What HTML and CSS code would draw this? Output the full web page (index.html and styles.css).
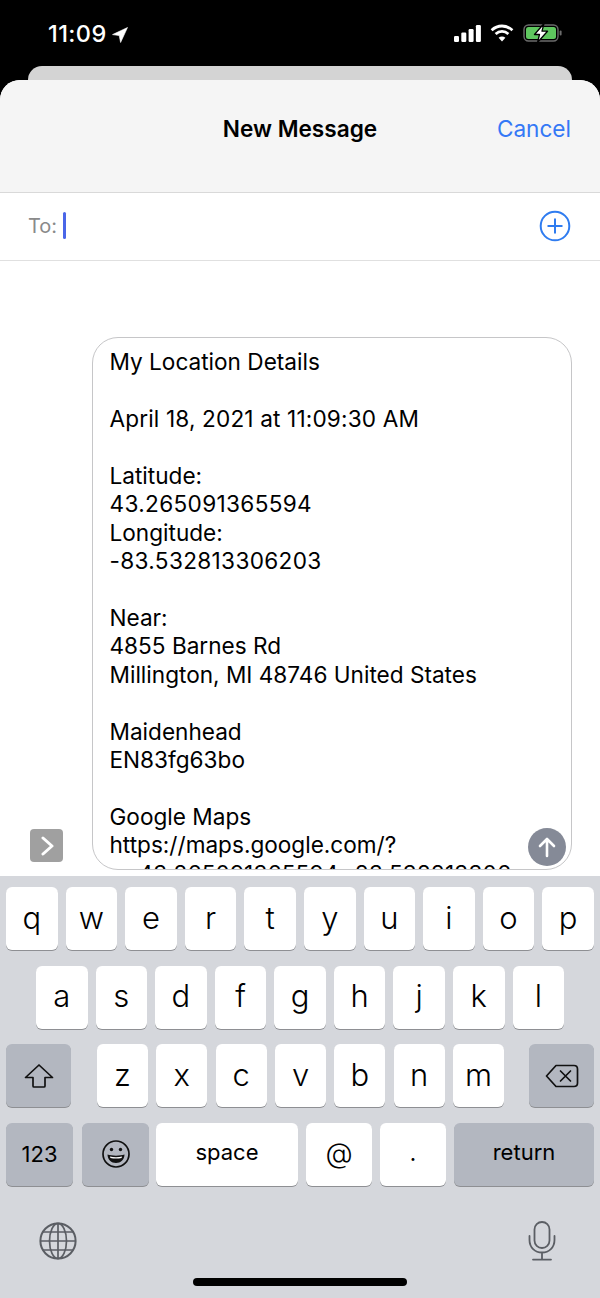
FILE: index.html
```html
<!DOCTYPE html>
<html lang="en">
<head>
    <meta charset="UTF-8">
    <meta name="viewport" content="width=device-width, initial-scale=1.0">
    <title>New Message</title>
    <link rel="stylesheet" href="styles.css">
</head>
<body>
    <div class="phone">
        <!-- Status bar -->
        <div class="status-bar">
            <div class="status-left">
                <span class="time">11:09</span>
                <svg class="loc-arrow" width="16" height="16" viewBox="0 0 16 16"><path d="M15.5 .5 L.5 7.6 L7.2 8.6 L8.6 15.5 Z" fill="#fff" stroke="#fff" stroke-width=".6" stroke-linejoin="round"/></svg>
            </div>
            <div class="status-right">
                <svg width="27" height="17" viewBox="0 0 27 17" fill="#fff">
                    <rect x="0" y="11" width="5" height="6" rx="1.2"/>
                    <rect x="7.3" y="7.5" width="5" height="9.5" rx="1.2"/>
                    <rect x="14.6" y="4" width="5" height="13" rx="1.2"/>
                    <rect x="21.9" y="0" width="5" height="17" rx="1.2"/>
                </svg>
                <svg width="24" height="18" viewBox="0 0 24 18" fill="none" stroke="#fff" stroke-width="2.8">
                    <path d="M1.6 6.2 C7.6 .6 16.4 .6 22.4 6.2"/>
                    <path d="M5.6 10 C9.4 6.6 14.6 6.6 18.4 10"/>
                    <path d="M12 17.6 L8.6 13.8 C10.6 12.2 13.4 12.2 15.4 13.8 Z" fill="#fff" stroke="none"/>
                </svg>
                <svg width="40" height="20" viewBox="0 0 40 20">
                    <rect x="1" y="2" width="34" height="16" rx="4.5" fill="none" stroke="#6b6b6b" stroke-width="1.4"/>
                    <rect x="3" y="4" width="30" height="12" rx="2.5" fill="#5fc75f"/>
                    <rect x="36.6" y="7.5" width="2" height="5" rx="1" fill="#6b6b6b"/>
                    <path d="M21 0.5 L11.5 11.5 H16.5 L14.5 19.5 L24.5 8.2 H19 Z" fill="#fff" stroke="#000" stroke-width="1.3" stroke-linejoin="round"/>
                </svg>
            </div>
        </div>
        <div class="back-card"></div>

        <!-- Compose sheet -->
        <div class="sheet">
            <div class="sheet-header">
                <span class="sheet-title">New Message</span>
                <span class="cancel">Cancel</span>
            </div>
            <div class="to-row">
                <span class="to-label">To:</span>
                <span class="caret"></span>
                <svg class="add-btn" width="34" height="34" viewBox="0 0 34 34" fill="none" stroke="#2f7cf0">
                    <circle cx="17" cy="17" r="14.3" stroke-width="2"/>
                    <path d="M17 9.5 V24.5 M9.5 17 H24.5" stroke-width="2"/>
                </svg>
            </div>
            <div class="compose">
                <div class="expand-btn">
                    <svg width="16" height="20" viewBox="0 0 16 20" fill="none" stroke="#fff" stroke-width="3" stroke-linecap="round" stroke-linejoin="round"><path d="M4 2 L13 10 L4 18"/></svg>
                </div>
                <div class="bubble">
                    <p class="bubble-text">My Location Details<br><br><span class="date">April 18, 2021 at 11:09:30 AM</span><br><br>Latitude:<br><span class="digits">43.265091365594</span><br>Longitude:<br><span class="digits">-83.532813306203</span><br><br>Near:<br>4855 Barnes Rd<br>Millington, MI 48746 United States<br><br>Maidenhead<br>EN83fg63bo<br><br>Google Maps<br>https://maps.google.com/?<br><span class="date">q=43.265091365594,-83.532813306</span></p>
                    <div class="send-btn">
                        <svg width="20" height="22" viewBox="0 0 20 22" fill="none" stroke="#fff" stroke-width="2.6" stroke-linecap="round" stroke-linejoin="round"><path d="M10 20 V3 M3 10 L10 3 L17 10"/></svg>
                    </div>
                </div>
            </div>
        </div>

        <!-- Keyboard -->
        <div class="keyboard">
            <div class="key-row">
                <div class="key">q</div><div class="key">w</div><div class="key">e</div><div class="key">r</div><div class="key">t</div>
                <div class="key">y</div><div class="key">u</div><div class="key">i</div><div class="key">o</div><div class="key">p</div>
            </div>
            <div class="key-row row-middle">
                <div class="key">a</div><div class="key">s</div><div class="key">d</div><div class="key">f</div><div class="key">g</div>
                <div class="key">h</div><div class="key">j</div><div class="key">k</div><div class="key">l</div>
            </div>
            <div class="key-row row-shift">
                <div class="key key-dark key-side">
                    <svg width="30" height="26" viewBox="0 0 30 26" fill="none" stroke="#111" stroke-width="1.7" stroke-linejoin="round"><path d="M15 2 L1.5 14.5 H9 V23 C9 23.6 9.4 24 10 24 H20 C20.6 24 21 23.6 21 23 V14.5 H28.5 Z"/></svg>
                </div>
                <div class="letters">
                    <div class="key">z</div><div class="key">x</div><div class="key">c</div><div class="key">v</div><div class="key">b</div><div class="key">n</div><div class="key">m</div>
                </div>
                <div class="key key-dark key-side">
                    <svg width="34" height="24" viewBox="0 0 34 24" fill="none" stroke="#111" stroke-width="1.7" stroke-linejoin="round" stroke-linecap="round"><path d="M11 1.5 H29 C31 1.5 32.5 3 32.5 5 V19 C32.5 21 31 22.5 29 22.5 H11 L1.5 12 Z"/><path d="M15.5 7 L25.5 17 M25.5 7 L15.5 17"/></svg>
                </div>
            </div>
            <div class="key-row row-bottom">
                <div class="key key-dark key-small key-num">123</div>
                <div class="key key-dark key-num key-emoji">
                    <svg width="30" height="30" viewBox="0 0 30 30" fill="none" stroke="#111" stroke-width="1.7"><circle cx="15" cy="15" r="13"/><circle cx="10.5" cy="10.5" r="1.7" fill="#111" stroke="none"/><circle cx="19.5" cy="10.5" r="1.7" fill="#111" stroke="none"/><path d="M6.5 15.5 C11 17 19 17 23.5 15.5 C23.5 20.5 19.5 24 15 24 C10.5 24 6.5 20.5 6.5 15.5 Z" fill="#111" stroke="none"/><path d="M9 17.6 C12.5 18.5 17.5 18.5 21 17.6 L20.6 19 C17 19.8 13 19.8 9.4 19 Z" fill="#fff" stroke="none"/></svg>
                </div>
                <div class="key key-small key-space">space</div>
                <div class="key key-at">@</div>
                <div class="key key-at key-dot">.</div>
                <div class="key key-dark key-small key-return">return</div>
            </div>
            <div class="kb-bottom">
                <svg width="38" height="38" viewBox="0 0 38 38" fill="none" stroke="#5b5e64" stroke-width="1.7">
                    <circle cx="19" cy="19" r="17.6" stroke-width="2"/>
                    <ellipse cx="19" cy="19" rx="8.5" ry="17.6"/>
                    <path d="M19 1.4 V36.6 M1.4 19 H36.6 M4 10 H34 M4 28 H34"/>
                </svg>
                <svg width="28" height="40" viewBox="0 0 28 40" fill="none" stroke="#5b5e64" stroke-width="1.8" stroke-linecap="round">
                    <rect x="6.5" y="1" width="15" height="26" rx="7.5"/>
                    <path d="M1.5 15 V19 C1.5 26.5 7 31.5 14 31.5 C21 31.5 26.5 26.5 26.5 19 V15 M14 31.5 V38.6 M5 38.6 H23"/>
                </svg>
            </div>
            <div class="home-indicator"></div>
        </div>
    </div>
</body>
</html>
```

FILE: styles.css
```css
* {
    box-sizing: border-box;
}
html, body {
    margin: 0;
    padding: 0;
}
body {
    font-family: Inter, "Liberation Sans", sans-serif;
    background-color: black;
    color: black;
}
.phone {
    width: 600px;
    height: 1298px;
    display: flex;
    flex-direction: column;
    overflow: hidden;
}

/* Status bar */
.status-bar {
    height: 66px;
    flex: none;
    display: flex;
    justify-content: space-between;
    align-items: flex-start;
    padding: 20px 37px 0 48px;
    color: white;
}
.status-left {
    display: flex;
    align-items: center;
    gap: 5px;
}
.time {
    font-size: 23.5px;
    line-height: 28px;
    font-weight: 500;
    letter-spacing: 0.4px;
}
.loc-arrow {
    margin-top: 1px;
}
.status-right {
    display: flex;
    align-items: center;
    gap: 9px;
    padding-top: 3px;
}
.back-card {
    height: 14px;
    flex: none;
    margin: 0 28px;
    background-color: #d4d4d4;
    border-radius: 14px 14px 0 0;
}

/* Sheet */
.sheet {
    flex: 1;
    display: flex;
    flex-direction: column;
    background-color: white;
    border-radius: 20px 20px 0 0;
    overflow: hidden;
}
.sheet-header {
    height: 113px;
    flex: none;
    display: flex;
    justify-content: flex-end;
    position: relative;
    padding: 33px 29px 0 0;
    background-color: #f5f5f5;
    border-bottom: 1px solid #d9d9d9;
    font-size: 22.6px;
    line-height: 32px;
}
.sheet-title {
    position: absolute;
    left: 0;
    right: 0;
    text-align: center;
    font-weight: 600;
    color: black;
}
.cancel {
    color: #3478f6;
}
.to-row {
    height: 68px;
    flex: none;
    display: flex;
    align-items: center;
    padding: 0 28px 2px 28px;
    border-bottom: 1px solid #e0e0e0;
}
.to-label {
    font-size: 20px;
    color: #8a8a8a;
}
.caret {
    width: 3px;
    height: 27px;
    margin-left: 6px;
    background-color: #4a66e8;
    border-radius: 2px;
}
.add-btn {
    margin-left: auto;
}
.compose {
    height: 615px;
    flex: none;
    display: flex;
    align-items: flex-end;
    gap: 29px;
    padding: 76px 28px 6px 30px;
}
.expand-btn {
    width: 33px;
    height: 33px;
    flex: none;
    display: flex;
    align-items: center;
    justify-content: center;
    margin-bottom: 8px;
    background-color: #a0a0a0;
    border-radius: 4px;
}
.bubble {
    flex: 1;
    height: 100%;
    position: relative;
    padding: 10px 0 0 16.5px;
    border: 1px solid #c6c6c8;
    border-radius: 26px;
    overflow: hidden;
}
.bubble-text {
    margin: 0;
    font-size: 22.6px;
    line-height: 28.44px;
    color: black;
    white-space: nowrap;
}
.date {
    letter-spacing: 0.15px;
}
.digits {
    letter-spacing: 0.33px;
}
.send-btn {
    position: absolute;
    right: 5px;
    bottom: 3px;
    width: 38px;
    height: 38px;
    display: flex;
    align-items: center;
    justify-content: center;
    background-color: #858a97;
    border-radius: 50%;
}

/* Keyboard */
.keyboard {
    height: 422px;
    flex: none;
    display: flex;
    flex-direction: column;
    gap: 15.6px;
    padding: 11px 6px 0;
    background-color: #d5d7dc;
}
.key-row {
    height: 63px;
    flex: none;
    display: flex;
    gap: 8px;
}
.row-middle {
    padding: 0 30px;
}
.row-shift {
    gap: 25px;
}
.letters {
    flex: 1;
    display: flex;
    gap: 8.5px;
    padding-left: 1px;
}
.key {
    flex: 1;
    display: flex;
    align-items: center;
    justify-content: center;
    padding-bottom: 3px;
    background-color: white;
    border-radius: 6px;
    box-shadow: 0 1px 0 #8e8f93;
    font-size: 31px;
    font-weight: 350;
    color: black;
}
.key-dark {
    padding-bottom: 0;
    background-color: #b3b7c0;
}
.key-side {
    flex: none;
    width: 65px;
}
.key-small {
    font-size: 22px;
    font-weight: 400;
}
.key-num {
    flex: none;
    width: 67px;
}
.key-emoji {
    margin: 0 -1px 0 1px;
}
.key-space {
    flex: none;
    width: 142px;
    padding-bottom: 4px;
}
.key-at {
    flex: none;
    width: 66px;
    font-size: 28px;
}
.key-dot {
    padding-bottom: 6px;
}
.key-return {
    flex: 1;
    padding-bottom: 4px;
}
.kb-bottom {
    display: flex;
    justify-content: space-between;
    align-items: center;
    height: 42px;
    margin-top: 19px;
    padding: 0 38px 0 33px;
}
.home-indicator {
    width: 214px;
    height: 8px;
    flex: none;
    margin: 0 auto;
    background-color: black;
    border-radius: 4px;
}
```
